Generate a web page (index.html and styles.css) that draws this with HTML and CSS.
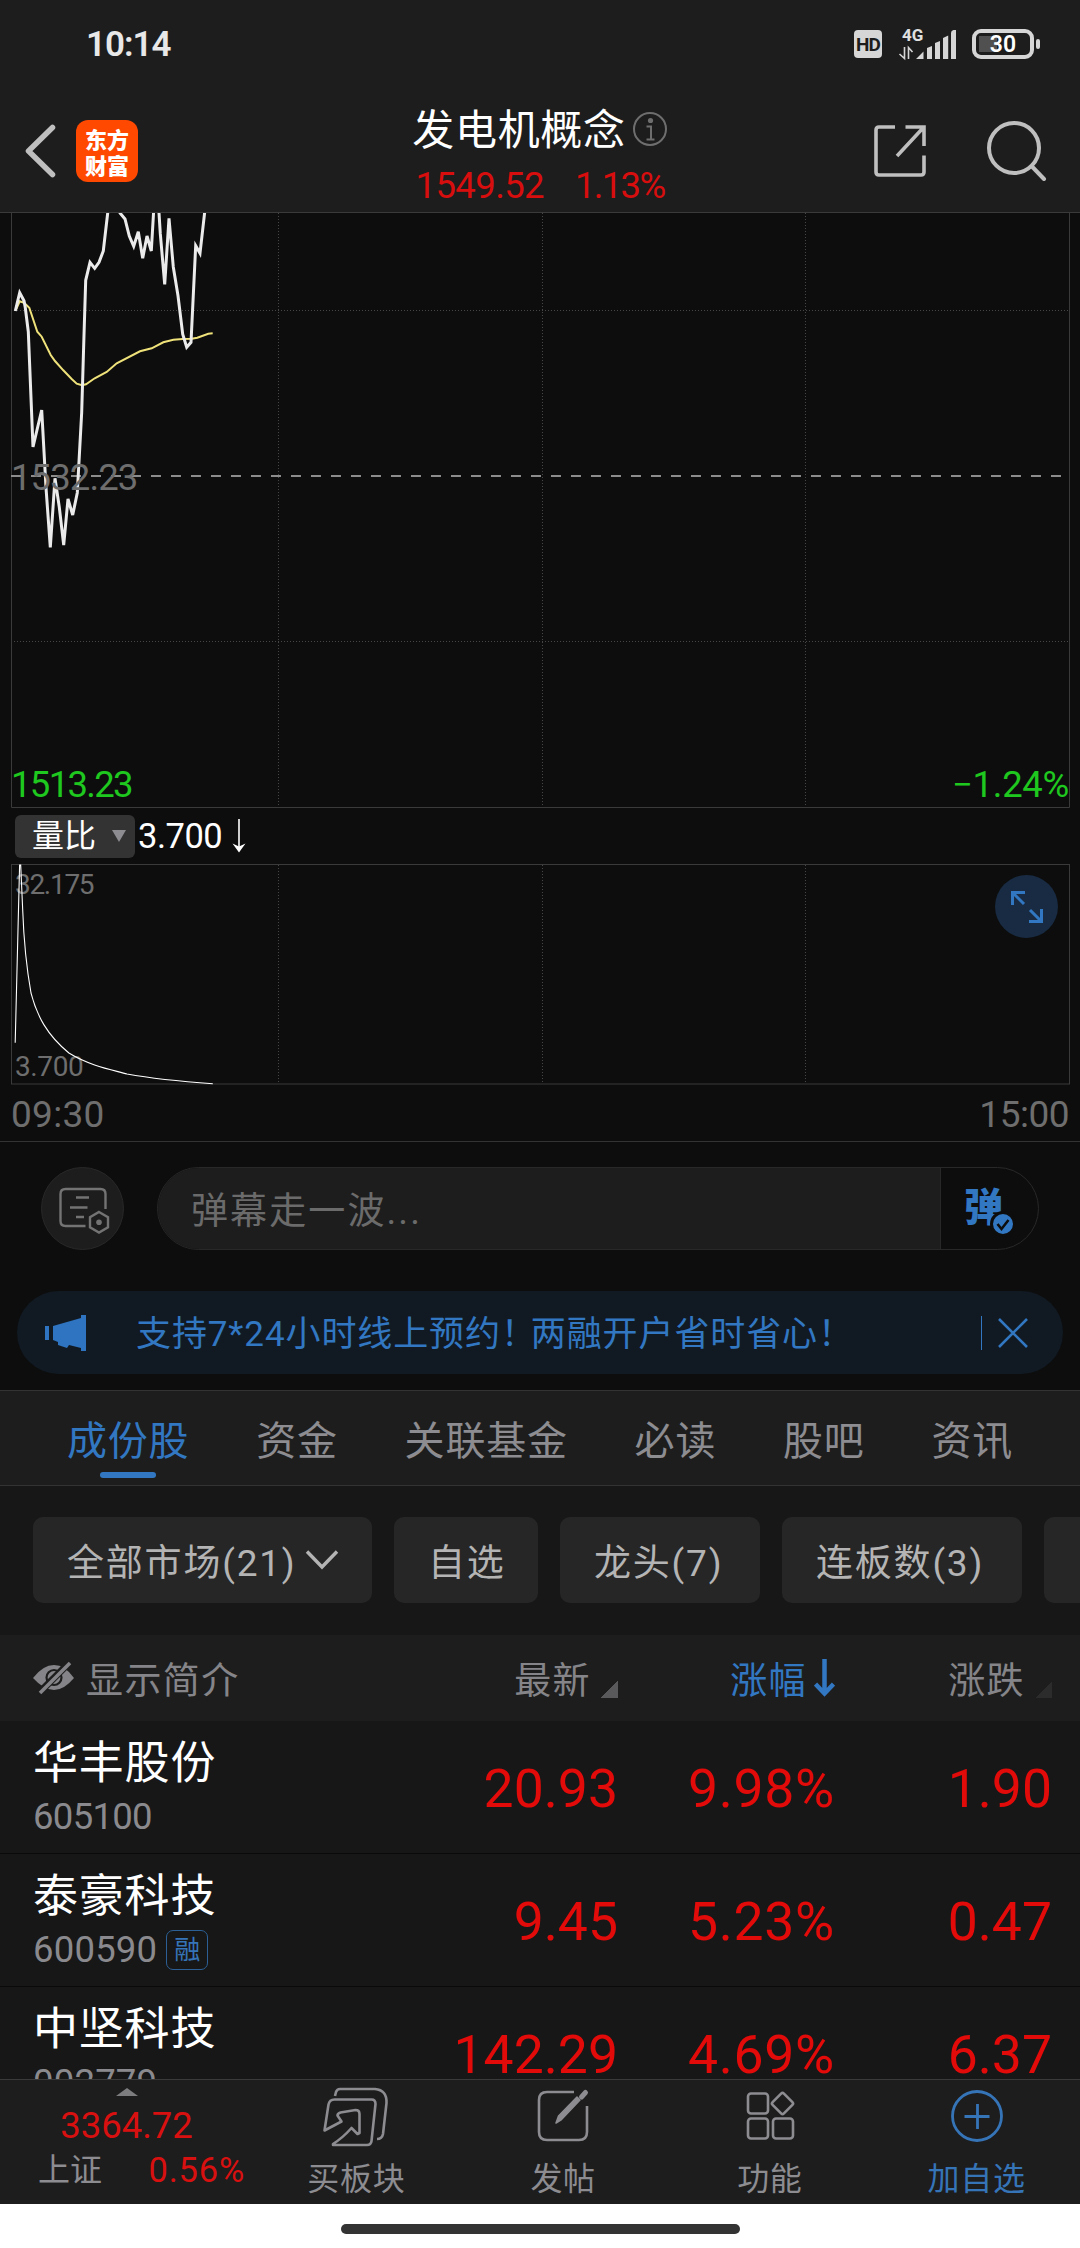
FILE: index.html
```
<!DOCTYPE html>
<html lang="zh-CN">
<head>
    <meta charset="UTF-8">
    <meta name="viewport" content="width=device-width, initial-scale=1.0">
    <title>发电机概念</title>
    <link rel="stylesheet" href="styles.css">
</head>
<body>
    <div class="status-bar">
        <span class="clock">10:14</span>
        <div class="status-icons">
            <span class="hd">HD</span>
            <svg class="signal" width="58" height="34" viewBox="900 26 58 34">
                <text x="903" y="39.5" class="net">4G</text>
                <path d="M905.5 46v11.5l-5-4.500M909.500 58v-11.500l4 4.500" fill="none" stroke="#d6d6d6" stroke-width="1.600"/>
                <path d="M917 58l7.500-7.500v7.500zM928 58v-11l5-2v13zM936 58v-16l5-2v18zM944 58v-21l5.200-2.500v23.500zM952 58v-26q0-2.500 2.500-3h2.500v29z" fill="#d6d6d6"/>
            </svg>
            <div class="battery"><span>30</span></div>
        </div>
    </div>

    <header class="header">
        <div class="header-left">
            <svg width="32" height="56" viewBox="0 0 32 56"><path d="M28.500 4.500L4.500 28l24 23.500" fill="none" stroke="#bfbfbf" stroke-width="5.500" stroke-linecap="round" stroke-linejoin="round"/></svg>
            <div class="logo"><span>东方</span><span>财富</span></div>
        </div>
        <div class="header-title">
            <div class="title-line">
                <h1>发电机概念</h1>
                <svg width="36" height="36" viewBox="0 0 36 36" fill="none" stroke="#6e6e6e" stroke-width="2">
                    <circle cx="18" cy="18" r="16"/>
                    <circle cx="18.500" cy="9.500" r="2.600" fill="#6e6e6e" stroke="none"/>
                    <path d="M14.500 15.500h4.500v12.500M14.500 28.500h8"/>
                </svg>
            </div>
            <div class="price-line"><span>1549.52</span><span class="change">1.13%</span></div>
        </div>
        <div class="header-right">
            <svg width="54" height="54" viewBox="0 0 54 54" fill="none" stroke="#bfbfbf" stroke-width="3.600" stroke-linecap="butt">
                <path d="M22 3H6q-3 0-3 3v42q0 3 3 3h42q3 0 3-3V31.500M51 22V3H32.500M50 4L24 32"/>
            </svg>
            <svg width="60" height="60" viewBox="0 0 60 60" fill="none" stroke="#bfbfbf" stroke-width="4" stroke-linecap="round">
                <circle cx="27" cy="27" r="25"/>
                <path d="M45 45.500l12 12.500"/>
            </svg>
        </div>
    </header>

    <svg class="chart price-chart" width="1080" height="595" viewBox="0 213 1080 595">
        <g class="grid">
            <path d="M278.500 213V807M542.500 213V807M805.500 213V807M11 310.500H1069M11 641.500H1069"/>
        </g>
        <path class="frame" d="M11.500 213V807.500H1069.500V213"/>
        <path class="base-line" d="M11 476H1069"/>
        <polyline class="avg" points="16,309.7 19.7,301.3 24,302.7 29.3,307.7 37.3,331.7 41.7,336.7 50.7,355 55,361 63.3,370.3 71.7,379 76.7,383.7 82,385.3 86,384.3 94.7,378.3 106.7,372 116.7,363.3 140,351.3 151.7,348.3 163.3,342.3 173.3,339.7 182.7,339 191.7,338.7 197.3,337.7 208.3,333.7 212.7,333.3"/>
        <polyline class="price" points="15.3,311 19.7,292.7 24,300.7 25.3,307.7 28.3,331.7 33,447 41.7,410 46,487.7 50.3,547.3 55,478.3 59.3,507.3 63.7,545 68,499 72.7,515 77.3,492.7 81.7,412.3 84,335 85.7,280.3 90,262.3 94.7,268.3 99,262.3 103.3,251 107.7,213 108.7,203 118,208 120,213 125,219 129.3,236 133.7,246.3 138.3,231.7 142.7,258.3 147,236 151.3,251 154,205 158.5,205 160.3,233.7 164.7,284.3 169,218.3 173.3,267 178,295.7 182.7,334.3 186.7,347.3 191,342.3 195.7,245.7 200,253.3 204.7,212"/>
        <text x="11" y="490" class="label gray">1532.23</text>
        <text x="11" y="797" class="label green tight">1513.23</text>
        <text x="1069" y="797" class="label green percent" text-anchor="end">−1.24%</text>
    </svg>

    <div class="indicator">
        <div class="indicator-select">
            <span>量比</span>
            <svg width="14" height="12" viewBox="0 0 14 12"><path d="M0 0h14L7 12z" fill="#8c8c91"/></svg>
        </div>
        <span class="indicator-value">3.700</span>
        <svg width="14" height="34" viewBox="0 0 14 34"><path d="M7 0v30" stroke="#fff" stroke-width="1.600"/><path d="M.5 24.500L7 27.500l6.500-3L7 33.500z" fill="#fff"/></svg>
    </div>

    <div class="volume">
        <svg class="chart" width="1080" height="222" viewBox="0 864 1080 222">
            <g class="grid"><path d="M278.500 865V1084M542.500 865V1084M805.500 865V1084"/></g>
            <rect class="frame" x="11.500" y="864.500" width="1058" height="219.500"/>
            <text x="15" y="894" class="label small tight gray">32.175</text>
            <text x="15" y="1076" class="label small gray">3.700</text>
            <path class="ratio" d="M15.200 1042.700L19.600 865L20.700 865L22.700 910C24 946 26 965 31 993C37 1016 47 1035 68.900 1053C90 1066 113 1070 127 1074Q160 1080 212.800 1083.700"/>
        </svg>
        <button class="expand">
            <svg width="32" height="32" viewBox="0 0 32 32" fill="none" stroke="#3277c2" stroke-width="3"><path d="M14 1.500H1.500V14M2 2l11 11M18 30.500h12.500V18M30 30L19 19"/></svg>
        </button>
        <div class="time-axis"><span>09:30</span><span class="end">15:00</span></div>
    </div>

    <div class="barrage">
        <button class="barrage-setting">
            <svg width="54" height="50" viewBox="57 1185 54 50" fill="none" stroke="#737373" stroke-width="2.400">
                <path d="M105.500 1209v-15q0-5-5-5h-35q-5 0-5 5v27q0 5 5 5h20M76 1197.500h13M70 1207.500h17.500M76 1217h8"/>
                <path d="M99 1212l9 5.200v10.200l-9 5.200l-9-5.200v-10.200z"/>
                <circle cx="99" cy="1222.300" r="2.800" fill="#737373" stroke="none"/>
            </svg>
        </button>
        <div class="barrage-box">
            <span class="barrage-input">弹幕走一波...</span>
            <div class="barrage-switch">
                <b>弹</b>
                <svg class="check" width="26" height="26" viewBox="0 0 26 26"><circle cx="13" cy="13" r="11.500" fill="#3277c2" stroke="#0d0d0d" stroke-width="3"/><path d="M7.500 13l4 5 7-9" fill="none" stroke="#0d0d0d" stroke-width="2.600"/></svg>
            </div>
        </div>
    </div>

    <div class="notice">
        <svg width="42" height="38" viewBox="45 1314 42 38" fill="#2f74c0"><path d="M45 1326h4v14h-4zM53 1326l28-8v-3h5v36h-5v-3l-12-3-2 3-9-3v-3l-5-2z"/></svg>
        <span class="notice-text">支持7*24小时线上预约<span class="mark">！</span>两融开户省时省心！</span>
        <i class="notice-sep"></i>
        <svg width="30" height="30" viewBox="0 0 30 30"><path d="M1 1l28 28M29 1L1 29" stroke="#3277c2" stroke-width="2.600"/></svg>
    </div>

    <nav class="tabs">
        <a class="active">成份股</a>
        <a>资金</a>
        <a>关联基金</a>
        <a>必读</a>
        <a>股吧</a>
        <a>资讯</a>
    </nav>

    <div class="filters">
        <button class="chip chip-market">全部市场(21)<svg width="34" height="20" viewBox="0 0 34 20"><path d="M2 1.500l15 15.500L32 1.500" fill="none" stroke="#b4b4b4" stroke-width="3.400"/></svg></button>
        <button class="chip chip-own">自选</button>
        <button class="chip chip-lead">龙头(7)</button>
        <button class="chip chip-limit">连板数(3)</button>
        <button class="chip chip-more"></button>
    </div>

    <div class="stocks">
        <div class="row head">
            <div class="intro">
                <svg width="42" height="34" viewBox="0 0 42 34">
                    <path d="M0 17Q10 4 21 4T41 17Q31 29 21 29T0 17z" fill="#858589"/>
                    <circle cx="21" cy="16.500" r="7.500" fill="none" stroke="#1d1d1d" stroke-width="2.200"/>
                    <path d="M5 33L36 2" stroke="#1d1d1d" stroke-width="7"/>
                    <path d="M7 32L37 2" stroke="#858589" stroke-width="3.600"/>
                </svg>
                <span>显示简介</span>
            </div>
            <div class="col">最新<i class="corner"></i></div>
            <div class="col sorted">涨幅<svg width="21" height="38" viewBox="0 0 21 38"><path d="M10.500 0v32M1.500 25l9 9.500 9-9.500" fill="none" stroke="#3277c2" stroke-width="4.500"/></svg></div>
            <div class="col">涨跌<i class="corner faint"></i></div>
        </div>
        <div class="row">
            <div class="stock"><strong>华丰股份</strong><span class="code-narrow">605100</span></div>
            <div class="num">20.93</div>
            <div class="num rate">9.98%</div>
            <div class="num">1.90</div>
        </div>
        <div class="row">
            <div class="stock"><strong>泰豪科技</strong><span>600590<em>融</em></span></div>
            <div class="num">9.45</div>
            <div class="num rate">5.23%</div>
            <div class="num">0.47</div>
        </div>
        <div class="row">
            <div class="stock"><strong>中坚科技</strong><span>002779</span></div>
            <div class="num">142.29</div>
            <div class="num rate">4.69%</div>
            <div class="num">6.37</div>
        </div>
    </div>

    <footer class="bottom-bar">
        <div class="index">
            <svg width="22" height="8" viewBox="0 0 22 8"><path d="M0 8L11 0l11 8z" fill="#7d7d80"/></svg>
            <div class="index-value">3364.72</div>
            <div class="index-line"><span>上证</span><b>0.56%</b></div>
        </div>
        <div class="action">
            <svg width="66" height="60" viewBox="323 2087 66 60" fill="none" stroke="#8c8c91" stroke-width="2.600" stroke-linejoin="round">
                <path d="M335 2096l1-4q1-3 4-3h35q12 1 11.500 14l-3.500 31q-1 5-6 5"/>
                <path d="M333 2145h34q4 0 4.500-4l4-37q0-4.500-4-4.500h-37q-5 0-6 5l-4 26 17-9-4-6q0-2 3-3l15-2.500q4 0 4 4v19l-2 1-6-6q-9 10-18.500 16z"/>
            </svg>
            <span>买板块</span>
        </div>
        <div class="action">
            <svg width="66" height="60" viewBox="529 2087 66 60" fill="none" stroke="#8c8c91" stroke-width="2.600">
                <path d="M573 2092h-27q-8 0-8 8v32q0 8 8 8h32q8 0 8-8v-26"/>
                <path d="M555 2123l2.500-7 18.500-19 3 3-18.500 19.500z" fill="#8c8c91" stroke-width="1.500" stroke-linejoin="round"/>
                <path d="M580.500 2097l4-4.500" stroke-width="5" stroke-linecap="round"/>
            </svg>
            <span>发帖</span>
        </div>
        <div class="action">
            <svg width="66" height="60" viewBox="736 2087 66 60" fill="none" stroke="#8c8c91" stroke-width="2.600">
                <rect x="747" y="2093.500" width="20" height="20" rx="3"/>
                <rect x="747" y="2118.500" width="20" height="20" rx="3"/>
                <rect x="772" y="2118.500" width="20" height="20" rx="3"/>
                <rect x="773.500" y="2095.500" width="16" height="16" rx="2" transform="rotate(45 781.500 2103.500)"/>
            </svg>
            <span>功能</span>
        </div>
        <div class="action primary">
            <svg width="66" height="60" viewBox="943 2087 66 60" fill="none" stroke="#3674b8" stroke-width="2.800">
                <circle cx="976" cy="2116" r="24.500"/>
                <path d="M963.500 2116.500h25M976.500 2104v25"/>
            </svg>
            <span>加自选</span>
        </div>
    </footer>
    <div class="home-area"><i></i></div>
</body>
</html>
```
FILE: styles.css
```
* {
    box-sizing: border-box;
}

body {
    margin: 0;
    width: 1080px;
    height: 2248px;
    overflow: hidden;
    display: flex;
    flex-direction: column;
    background-color: #0d0d0d;
    color: #fff;
    font-family: Roboto, "Noto Sans CJK SC", sans-serif;
}

svg {
    display: block;
    flex: none;
}

button {
    border: none;
    padding: 0;
    font-family: inherit;
    color: inherit;
}

.status-bar {
    height: 90px;
    padding: 0 39px 0 86px;
    display: flex;
    justify-content: space-between;
    background-color: #1d1d1d;
}

.clock {
    margin-top: 25px;
    line-height: 40px;
    font-size: 35px;
    font-weight: 600;
    color: #e8e8e8;
    letter-spacing: -1px;
}

.status-icons {
    display: flex;
    height: 88px;
    align-items: center;
}

.hd {
    width: 28px;
    height: 28px;
    margin-right: 17px;
    border-radius: 4px;
    background-color: #d6d6d6;
    color: #1d1d1d;
    font-size: 19px;
    font-weight: 700;
    line-height: 29px;
    text-align: center;
    letter-spacing: -1px;
}

.signal {
    margin-right: 15px;
    overflow: visible;
}

.net {
    font-size: 17px;
    font-weight: 700;
    fill: #e0e0e0;
}

.battery {
    position: relative;
    width: 62px;
    height: 30px;
    margin-right: 7px;
    border: 4px solid #d6d6d6;
    border-radius: 9px;
    line-height: 23px;
    text-align: center;
    font-size: 23px;
    font-weight: 600;
    background: linear-gradient(#505050, #505050) 3px 3px / 18px 16px no-repeat;
}

.battery::after {
    content: "";
    position: absolute;
    right: -10px;
    top: 6px;
    width: 4px;
    height: 10px;
    border-radius: 2px;
    background-color: #d6d6d6;
}

.header {
    height: 123px;
    padding: 0 33px 0 24px;
    display: grid;
    grid-template-columns: 1fr auto 1fr;
    background-color: #1d1d1d;
    border-bottom: 1px solid #3a3a3a;
}

.header-left {
    display: flex;
    align-items: center;
    gap: 20px;
}

.logo {
    width: 62px;
    height: 62px;
    padding-top: 5px;
    border-radius: 12px;
    background-color: #ff4800;
    font-family: "Noto Sans CJK SC", sans-serif;
    font-size: 22px;
    font-weight: 900;
    line-height: 26px;
    text-align: center;
}

.logo span {
    display: block;
}

.header-title {
    padding: 14px 0 0 9px;
}

.title-line {
    display: flex;
    align-items: center;
    justify-content: center;
    height: 54px;
    gap: 6px;
}

h1 {
    margin: 0;
    font-size: 42px;
    font-weight: 400;
    line-height: 54px;
    letter-spacing: 0.7px;
}

.title-line svg {
    margin-bottom: 5px;
}

.price-line {
    display: flex;
    justify-content: center;
    gap: 31px;
    margin-top: 6px;
    line-height: 44px;
    font-size: 36.5px;
    letter-spacing: -0.6px;
    color: #d80e0e;
}

.price-line .change {
    letter-spacing: -1.7px;
}

.header-right {
    display: flex;
    align-items: center;
    justify-content: flex-end;
    gap: 60px;
}

.chart {
    background-color: #0d0d0d;
    fill: none;
}

.grid path {
    stroke: #464646;
    stroke-width: 1;
    stroke-dasharray: 1 2;
}

.frame {
    stroke: #3a3a3a;
    stroke-width: 1;
}

.base-line {
    stroke: #8c8c8c;
    stroke-width: 2;
    stroke-dasharray: 10 10;
}

.avg {
    stroke: #efe27a;
    stroke-width: 2;
}

.price {
    stroke: #ebebeb;
    stroke-width: 3;
}

.ratio {
    stroke: #fff;
    stroke-width: 1.1;
}

.label {
    font-size: 36.5px;
    letter-spacing: -0.9px;
}

.tight {
    letter-spacing: -1.7px;
}

.percent {
    letter-spacing: -0.3px;
}

.small {
    font-size: 28px;
    letter-spacing: -0.4px;
}

.small.tight {
    letter-spacing: -1.3px;
}

.gray {
    fill: #6e6e6e;
}

.green {
    fill: #1fc81f;
}

.indicator {
    height: 56px;
    padding: 0 15px;
    display: flex;
    align-items: center;
}

.indicator-select {
    display: flex;
    align-items: center;
    width: 120px;
    height: 43px;
    margin-right: 3px;
    padding: 0 9px 0 17px;
    justify-content: space-between;
    border-radius: 6px;
    background-color: #333;
    font-size: 32px;
    line-height: 44px;
}

.indicator-value {
    width: 94px;
    font-size: 34.5px;
    letter-spacing: -0.5px;
}

.volume {
    position: relative;
    height: 278px;
    border-bottom: 1px solid #333;
}

.expand {
    position: absolute;
    right: 22px;
    top: 11px;
    width: 63px;
    height: 63px;
    border-radius: 50%;
    background-color: #182b42;
    display: flex;
    align-items: center;
    justify-content: center;
}

.time-axis {
    display: flex;
    justify-content: space-between;
    padding: 7px 11px 0;
    line-height: 44px;
    font-size: 37px;
    letter-spacing: 0.3px;
    color: #6e6e6e;
}

.time-axis .end {
    letter-spacing: -0.5px;
}

.barrage {
    height: 149px;
    padding: 25px 41px 0;
    display: flex;
    gap: 33px;
}

.barrage-setting {
    width: 83px;
    height: 83px;
    border: 1px solid #282828;
    border-radius: 50%;
    background-color: #1d1d1d;
    display: flex;
    align-items: center;
    justify-content: center;
}

.barrage-setting svg {
    margin: 3px 0 0 3px;
}

.barrage-box {
    flex: 1;
    height: 83px;
    display: flex;
    border: 1px solid #282828;
    border-radius: 42px;
    overflow: hidden;
}

.barrage-input {
    flex: 1;
    padding-left: 33px;
    background-color: #1d1d1d;
    font-size: 37px;
    line-height: 87px;
    letter-spacing: 2.1px;
    color: #6b6b6b;
}

.barrage-switch {
    position: relative;
    width: 98px;
    border-left: 1px solid #282828;
    color: #3277c2;
}

.barrage-switch b {
    display: block;
    padding-left: 23px;
    font-size: 39px;
    font-weight: 900;
    line-height: 81px;
}

.check {
    position: absolute;
    left: 49px;
    top: 43px;
}

.notice {
    height: 83px;
    margin: 0 17px 16px;
    padding: 0 35px 0 28px;
    display: flex;
    align-items: center;
    border-radius: 42px;
    background-color: #111a23;
    color: #3277c2;
}

.notice-text {
    flex: 1;
    padding: 5px 0 0 49px;
    font-size: 35px;
    line-height: 60px;
    letter-spacing: 0.9px;
}

.mark {
    margin-right: -6px;
}

.notice-sep {
    width: 1px;
    height: 34px;
    margin-right: 16px;
    background-color: #3277c2;
}

.tabs {
    height: 96px;
    padding-left: 67px;
    display: flex;
    gap: 66.8px;
    border-top: 1px solid #333;
    border-bottom: 1px solid #333;
    background-color: #1d1d1d;
    color: #8c8c91;
    font-size: 40px;
    letter-spacing: 0.8px;
    line-height: 101px;
}

.tabs a {
    position: relative;
    height: 94px;
    white-space: nowrap;
}

.tabs .active {
    color: #3277c2;
}

.tabs .active::after {
    content: "";
    position: absolute;
    left: 33px;
    bottom: 7px;
    width: 56px;
    height: 6px;
    border-radius: 3px;
    background-color: #3277c2;
}

.filters {
    height: 149px;
    padding: 31px 0 0 33px;
    display: flex;
    gap: 22px;
    background-color: #171717;
    overflow: hidden;
}

.chip {
    flex: none;
    height: 86px;
    padding-left: 34px;
    display: flex;
    align-items: center;
    border-radius: 10px;
    background-color: #262626;
    color: #b4b4b4;
    font-size: 37px;
    letter-spacing: 1.8px;
    white-space: nowrap;
}

.chip-market {
    width: 339px;
}

.chip-market svg {
    margin-left: 8px;
}

.chip-own {
    width: 144px;
}

.chip-lead {
    width: 200px;
}

.chip-limit {
    width: 240px;
}

.chip-more {
    width: 140px;
}

.stocks {
    height: 444px;
    overflow: hidden;
    background-color: #171717;
}

.row {
    height: 133px;
    padding: 0 28px 0 33px;
    display: grid;
    grid-template-columns: 1fr 220px 217px 217px;
    border-bottom: 1px solid #0a0a0a;
}

.head {
    height: 86px;
    border-bottom: none;
    background-color: #1d1d1d;
    color: #858589;
    font-size: 37px;
    letter-spacing: 1.4px;
    line-height: 93px;
}

.intro {
    display: flex;
    align-items: center;
    gap: 11px;
}

.intro svg {
    margin-bottom: 8px;
}

.col {
    display: flex;
    justify-content: flex-end;
}

.corner {
    width: 17px;
    height: 17px;
    margin: 46px 0 0 10px;
    background: linear-gradient(135deg, transparent 50%, #59595c 50%);
}

.faint {
    background: linear-gradient(135deg, transparent 50%, #2c2c2c 50%);
}

.sorted {
    color: #3277c2;
}

.sorted svg {
    margin: 24px 0 0 7px;
}

.stock {
    display: flex;
    flex-direction: column;
    padding-top: 14px;
}

.stock strong {
    font-size: 45px;
    font-weight: 400;
    line-height: 57px;
    letter-spacing: 0.8px;
}

.stock span {
    display: flex;
    align-items: center;
    height: 49px;
    font-size: 36.5px;
    letter-spacing: 0.2px;
    color: #8a8a8e;
}

.stock .code-narrow {
    letter-spacing: -0.7px;
}

.stock em {
    width: 42px;
    height: 40px;
    margin-left: 9px;
    border: 1px solid #2c5f96;
    border-radius: 7px;
    color: #3674b8;
    font-style: normal;
    font-size: 26px;
    line-height: 39px;
    text-align: center;
}

.num {
    text-align: right;
    font-size: 53.5px;
    line-height: 135px;
    color: #e30a0a;
}

.rate {
    letter-spacing: 0.7px;
}

.bottom-bar {
    height: 125px;
    display: grid;
    grid-template-columns: 253px repeat(4, 1fr);
    border-top: 1px solid #3a3a3a;
    background-color: #1d1d1d;
    color: #8c8c91;
    font-size: 32px;
}

.index {
    padding-top: 8px;
    display: flex;
    flex-direction: column;
    align-items: center;
}

.index-value {
    margin-top: 8px;
    line-height: 44px;
    font-size: 36.5px;
    color: #d81010;
}

.index-line {
    width: 100%;
    padding: 0 8px 0 38px;
    display: flex;
    justify-content: space-between;
    line-height: 45px;
}

.index-line b {
    font-size: 34.5px;
    font-weight: 400;
    letter-spacing: 0.8px;
    color: #d81010;
}

.action {
    padding-top: 7px;
    display: flex;
    flex-direction: column;
    align-items: center;
}

.action span {
    line-height: 64px;
    letter-spacing: 0.7px;
}

.primary {
    color: #3674b8;
}

.home-area {
    height: 44px;
    padding-top: 20px;
    background-color: #fff;
}

.home-area i {
    display: block;
    width: 399px;
    height: 10px;
    margin: 0 auto;
    border-radius: 5px;
    background-color: #333;
}
```
